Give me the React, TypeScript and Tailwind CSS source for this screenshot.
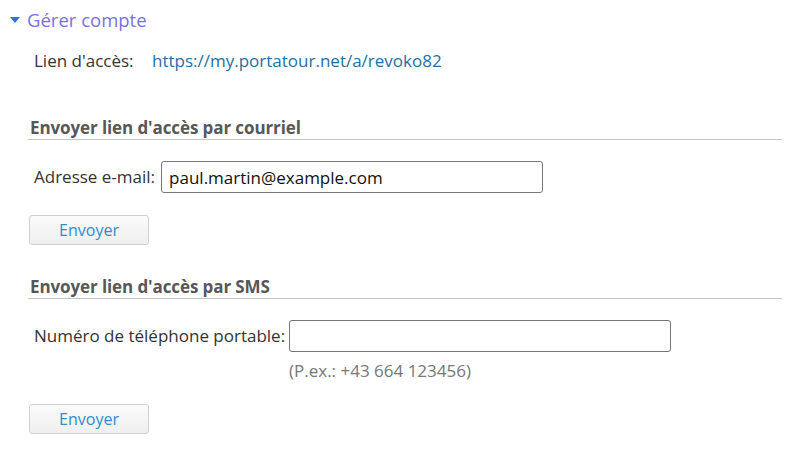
const font = { fontFamily: '"Open Sans", "Noto Sans", Arial, sans-serif' };

function SendButton() {
  return (
    <button
      type="button"
      className="h-[30px] w-[120px] rounded-[3px] border border-[#d0d0d0] bg-gradient-to-b from-[#fbfbfb] to-[#efefef] text-[16px] text-[#2b8fcb]"
    >
      Envoyer
    </button>
  );
}

function SectionTitle({ children }: { children: string }) {
  return (
    <div className="mr-[17px] border-b border-[#c4c4c4] pb-[1px] pl-[2px] text-[17px] font-bold leading-[20px] tracking-[-0.1px] text-[#575757]">
      {children}
    </div>
  );
}

export default function App() {
  return (
    <div className="h-[449px] w-[799px] bg-white text-[#333]" style={font}>
      <div className="flex items-center gap-[7px] pl-[10px] pt-[8px]">
        <svg width="10" height="6" viewBox="0 0 10 6">
          <path d="M0 0 L10 0 L5 6 Z" fill="#2f72d8" />
        </svg>
        <span className="text-[18.5px] leading-[24px] text-[#7c6fe6]">Gérer compte</span>
      </div>

      <div className="mt-[18px] flex pl-[34px] text-[17px] leading-[22px]">
        <span className="w-[118px] text-[#333]">Lien d'accès:</span>
        <span className="text-[#1d70a6]">https://my.portatour.net/a/revoko82</span>
      </div>

      <div className="mt-[46px] pl-[28px]">
        <SectionTitle>Envoyer lien d'accès par courriel</SectionTitle>

        <div className="mt-[21px] flex items-center pl-[6px]">
          <label className="mr-[6px] text-[17px] text-[#333]">Adresse e-mail:</label>
          <input
            defaultValue="paul.martin@example.com"
            className="h-[32px] w-[382px] rounded-[3px] border border-[#777] px-[7px] text-[17px] text-[#111] outline-none"
          />
        </div>

        <div className="mt-[22px] pl-[1px]">
          <SendButton />
        </div>

        <div className="mt-[32px]">
          <SectionTitle>Envoyer lien d'accès par SMS</SectionTitle>
        </div>

        <div className="mt-[21px] flex items-center pl-[6px]">
          <label className="mr-[4px] text-[17px] text-[#333]">Numéro de téléphone portable:</label>
          <input className="h-[32px] w-[382px] rounded-[3px] border border-[#777] px-[7px] text-[17px] text-[#111] outline-none" />
        </div>
        <div className="mt-[8px] pl-[261px] text-[17px] leading-[22px] text-[#777]">(P.ex.: +43 664 123456)</div>

        <div className="mt-[22px] pl-[1px]">
          <SendButton />
        </div>
      </div>
    </div>
  );
}
